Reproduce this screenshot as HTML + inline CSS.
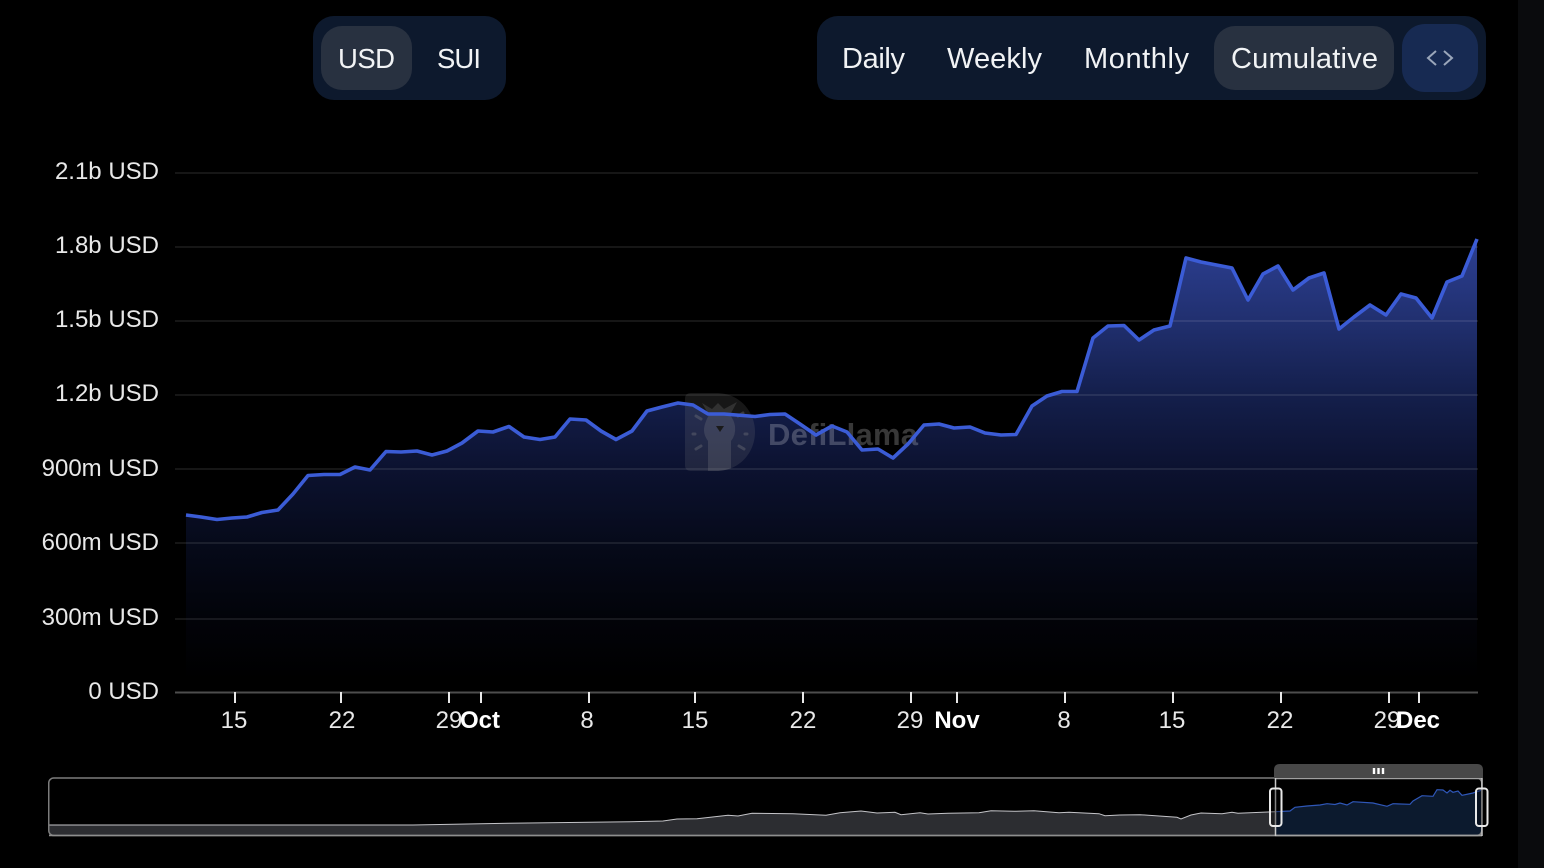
<!DOCTYPE html>
<html><head><meta charset="utf-8"><style>
html,body{margin:0;padding:0;background:#000;width:1544px;height:868px;overflow:hidden}
svg{display:block}
text{font-family:"Liberation Sans",sans-serif}
.b{font-size:29px;fill:#f1f3f5}
.c{font-size:27.5px;fill:#f1f3f5}
.y{font-size:24px;fill:#e8e8e8;text-anchor:end}
.x{font-size:24px;fill:#e8e8e8;text-anchor:middle}
.m{font-size:24px;fill:#fff;font-weight:700;text-anchor:middle}
</style></head><body>
<svg width="1544" height="868" viewBox="0 0 1544 868" xmlns="http://www.w3.org/2000/svg">
<defs>
<linearGradient id="g" gradientUnits="userSpaceOnUse" x1="0" y1="240" x2="0" y2="680">
<stop offset="0" stop-color="#2c3f92"/><stop offset="0.18" stop-color="#213070"/><stop offset="0.35" stop-color="#141f4c"/><stop offset="0.52" stop-color="#0c1230"/><stop offset="0.69" stop-color="#060a1a"/><stop offset="0.86" stop-color="#020309"/><stop offset="1" stop-color="#000"/>
</linearGradient>
<clipPath id="dclip"><path d="M685 393H716C740 393 755 412 755 432C755 452 740 471 716 471H685Z"/></clipPath>
</defs>
<rect width="1544" height="868" fill="#000"/>
<rect x="1518" y="0" width="26" height="868" fill="#0a0b0d"/>

<rect x="313" y="16" width="193" height="84" rx="21" fill="#0d192d"/>
<rect x="321" y="26" width="91" height="64" rx="21" fill="#283140"/>
<text class="c" x="338" y="68" textLength="57">USD</text>
<text class="c" x="437" y="68" textLength="44">SUI</text>

<rect x="817" y="16" width="669" height="84" rx="21" fill="#0d192d"/>
<rect x="1214" y="26" width="180" height="64" rx="21" fill="#283140"/>
<rect x="1402" y="24" width="76" height="68" rx="23" fill="#172a52"/>
<text class="b" x="842" y="68" textLength="63">Daily</text>
<text class="b" x="947" y="68" textLength="95">Weekly</text>
<text class="b" x="1084" y="68" textLength="105">Monthly</text>
<text class="b" x="1231" y="68" textLength="147">Cumulative</text>
<path d="M1436 51L1428 58L1436 65M1444 51L1452 58L1444 65" fill="none" stroke="#9aa6ba" stroke-width="2"/>

<path fill="url(#g)" d="M186 515L201 517L217 519.5L232 518L247 517L262 512.5L278 510L293 494L308 475.5L324 474.5L340 474.5L355 467L370 470L386 451.5L401 452L417 451L432 455L447 451L462 443L478 431L493 432L509 426.5L524 437L540 439.5L555 437L570 419L586 420L601 431L616 439.5L632 431L647 411L662 407L678 403L693 405L708 414L724 414L755 416.5L770 414.5L785 414L800 424L816 435L832 426L847 432L862 450L878 449L893 458L908 444L924 425L939 424L954 428L970 427L985 433L1001 435L1016 434.5L1032 406L1047 396L1062 391.5L1077 391.5L1093 338L1108 326L1124 325.5L1139 340L1154 330L1170 326L1186 258L1201 262L1232 268L1248 300L1263 274L1278 266L1293 290L1309 278L1324 273L1339 329L1354 317L1370 305L1386 315L1401 294L1416 298L1432 318L1447 282L1462 276L1477 239V692H186Z"/>

<g stroke="#fff" stroke-opacity=".085" stroke-width="2">
<path d="M175 173H1478M175 247H1478M175 321H1478M175 395H1478M175 469H1478M175 543H1478M175 619H1478"/>
</g>

<g>
<path d="M685 399Q685 393 691 393H716C740 393 755 412 755 432C755 452 740 471 716 471H691Q685 471 685 465Z" fill="#8a8a8a" fill-opacity=".17"/>
<g clip-path="url(#dclip)">
<path d="M708 471V441Q702 433 705 424Q707 418 709 415L702 403L712 409L718 403L724 409L737 402L730 415Q734 420 735 426Q736 435 731 441V471Z" fill="#9a9a9a" fill-opacity=".2"/>
</g>
<path d="M716 426H724L720 432Z" fill="#1a1a1a"/>
<g stroke="#8a8a8a" stroke-opacity=".3" stroke-width="3" stroke-linecap="round" fill="none">
<path d="M696 416L701 419M693 434H695M696 449L701 446M738 416L743 413M745 434H747M739 446L744 449"/>
</g>
<text x="768" y="445" font-size="31" font-weight="700" fill="#fff" fill-opacity=".22" textLength="150">DefiLlama</text>
</g>

<path fill="none" stroke="#3b5cd6" stroke-width="3.6" stroke-linejoin="round" d="M186 515L201 517L217 519.5L232 518L247 517L262 512.5L278 510L293 494L308 475.5L324 474.5L340 474.5L355 467L370 470L386 451.5L401 452L417 451L432 455L447 451L462 443L478 431L493 432L509 426.5L524 437L540 439.5L555 437L570 419L586 420L601 431L616 439.5L632 431L647 411L662 407L678 403L693 405L708 414L724 414L755 416.5L770 414.5L785 414L800 424L816 435L832 426L847 432L862 450L878 449L893 458L908 444L924 425L939 424L954 428L970 427L985 433L1001 435L1016 434.5L1032 406L1047 396L1062 391.5L1077 391.5L1093 338L1108 326L1124 325.5L1139 340L1154 330L1170 326L1186 258L1201 262L1232 268L1248 300L1263 274L1278 266L1293 290L1309 278L1324 273L1339 329L1354 317L1370 305L1386 315L1401 294L1416 298L1432 318L1447 282L1462 276L1477 239"/>

<path d="M175 692.5H1478" stroke="#4d4d4d" stroke-width="2"/>
<path d="M235 692V703M341 692V703M449 692V703M481 692V703M589 692V703M695 692V703M803 692V703M911 692V703M957 692V703M1065 692V703M1173 692V703M1281 692V703M1389 692V703M1419 692V703" stroke="#e8e8e8" stroke-width="2"/>

<text class="y" x="159" y="179">2.1b USD</text>
<text class="y" x="159" y="253">1.8b USD</text>
<text class="y" x="159" y="327">1.5b USD</text>
<text class="y" x="159" y="401">1.2b USD</text>
<text class="y" x="159" y="476">900m USD</text>
<text class="y" x="159" y="550">600m USD</text>
<text class="y" x="159" y="625">300m USD</text>
<text class="y" x="159" y="699">0 USD</text>

<text class="x" x="234" y="728">15</text>
<text class="x" x="342" y="728">22</text>
<text class="x" x="449" y="728">29</text>
<text class="m" x="480" y="728">Oct</text>
<text class="x" x="587" y="728">8</text>
<text class="x" x="695" y="728">15</text>
<text class="x" x="803" y="728">22</text>
<text class="x" x="910" y="728">29</text>
<text class="m" x="957" y="728">Nov</text>
<text class="x" x="1064" y="728">8</text>
<text class="x" x="1172" y="728">15</text>
<text class="x" x="1280" y="728">22</text>
<text class="x" x="1387" y="728">29</text>
<text class="m" x="1418" y="728">Dec</text>

<!-- data zoom -->
<path fill="#2c2d31" d="M49 825H413L508 823.3L630 821.7L663 821L677 819L697 818.7L728 815.3L738 816L752 813.3L793 813.7L826 815.3L840 812.7L861 811L877 813L895 812.3L901 814.7L920 812.7L928 814L948 813.3L979 812.7L991 810.7L1014 811.3L1034 810.7L1059 812.7L1069 812.3L1099 813.7L1105 815.7L1120 815L1140 814.7L1177 817.3L1181 819L1191 815L1201 813L1222 813.7L1232 812.3L1238 813.3L1275 811.7V835H49Z"/>
<path fill="none" stroke="#c4c4c8" stroke-width="1" d="M49 825H413L508 823.3L630 821.7L663 821L677 819L697 818.7L728 815.3L738 816L752 813.3L793 813.7L826 815.3L840 812.7L861 811L877 813L895 812.3L901 814.7L920 812.7L928 814L948 813.3L979 812.7L991 810.7L1014 811.3L1034 810.7L1059 812.7L1069 812.3L1099 813.7L1105 815.7L1120 815L1140 814.7L1177 817.3L1181 819L1191 815L1201 813L1222 813.7L1232 812.3L1238 813.3L1275 811.7"/>
<path fill="#0c1a2e" d="M1275 811.7L1290 811L1295 807.3L1307 806L1320 805L1327 803.7L1335 804.5L1340 803L1347 805L1353 801.7L1373 803L1387 806.3L1393 803.7L1410 804.3L1413 801L1422 795.7L1433 796.3L1437 789.7L1443 790L1447 793L1450 790.3L1453 792.3L1458 791L1462 795.3L1473 793L1482 790V835H1275Z"/>
<path fill="none" stroke="#2f57b8" stroke-width="1.2" d="M1275 811.7L1290 811L1295 807.3L1307 806L1320 805L1327 803.7L1335 804.5L1340 803L1347 805L1353 801.7L1373 803L1387 806.3L1393 803.7L1410 804.3L1413 801L1422 795.7L1433 796.3L1437 789.7L1443 790L1447 793L1450 790.3L1453 792.3L1458 791L1462 795.3L1473 793L1482 790"/>

<rect x="48.75" y="778" width="1433" height="57.5" rx="5" fill="none" stroke="#7c7c7c" stroke-width="1.5"/>
<path d="M49 835.5H1482" stroke="#8e8e8e" stroke-width="1.5"/>
<path d="M1275 778.5H1482M1275 835.5H1482" stroke="#a0a0a0" stroke-width="1.5"/>
<path d="M1274 778V770Q1274 764 1280 764H1477Q1483 764 1483 770V778Z" fill="#484848"/>
<path d="M1374 768V774M1378.5 768V774M1383 768V774" stroke="#fff" stroke-width="2.4"/>
<path d="M1275.5 778V836M1482 778V836" stroke="#c8c8c8" stroke-width="1.5"/>
<rect x="1270" y="788.5" width="11.5" height="37.5" rx="3" fill="#000" fill-opacity=".35" stroke="#e8e8e8" stroke-width="2"/>
<rect x="1476" y="788.5" width="11.5" height="37.5" rx="3" fill="#000" fill-opacity=".35" stroke="#e8e8e8" stroke-width="2"/>
</svg>
</body></html>
